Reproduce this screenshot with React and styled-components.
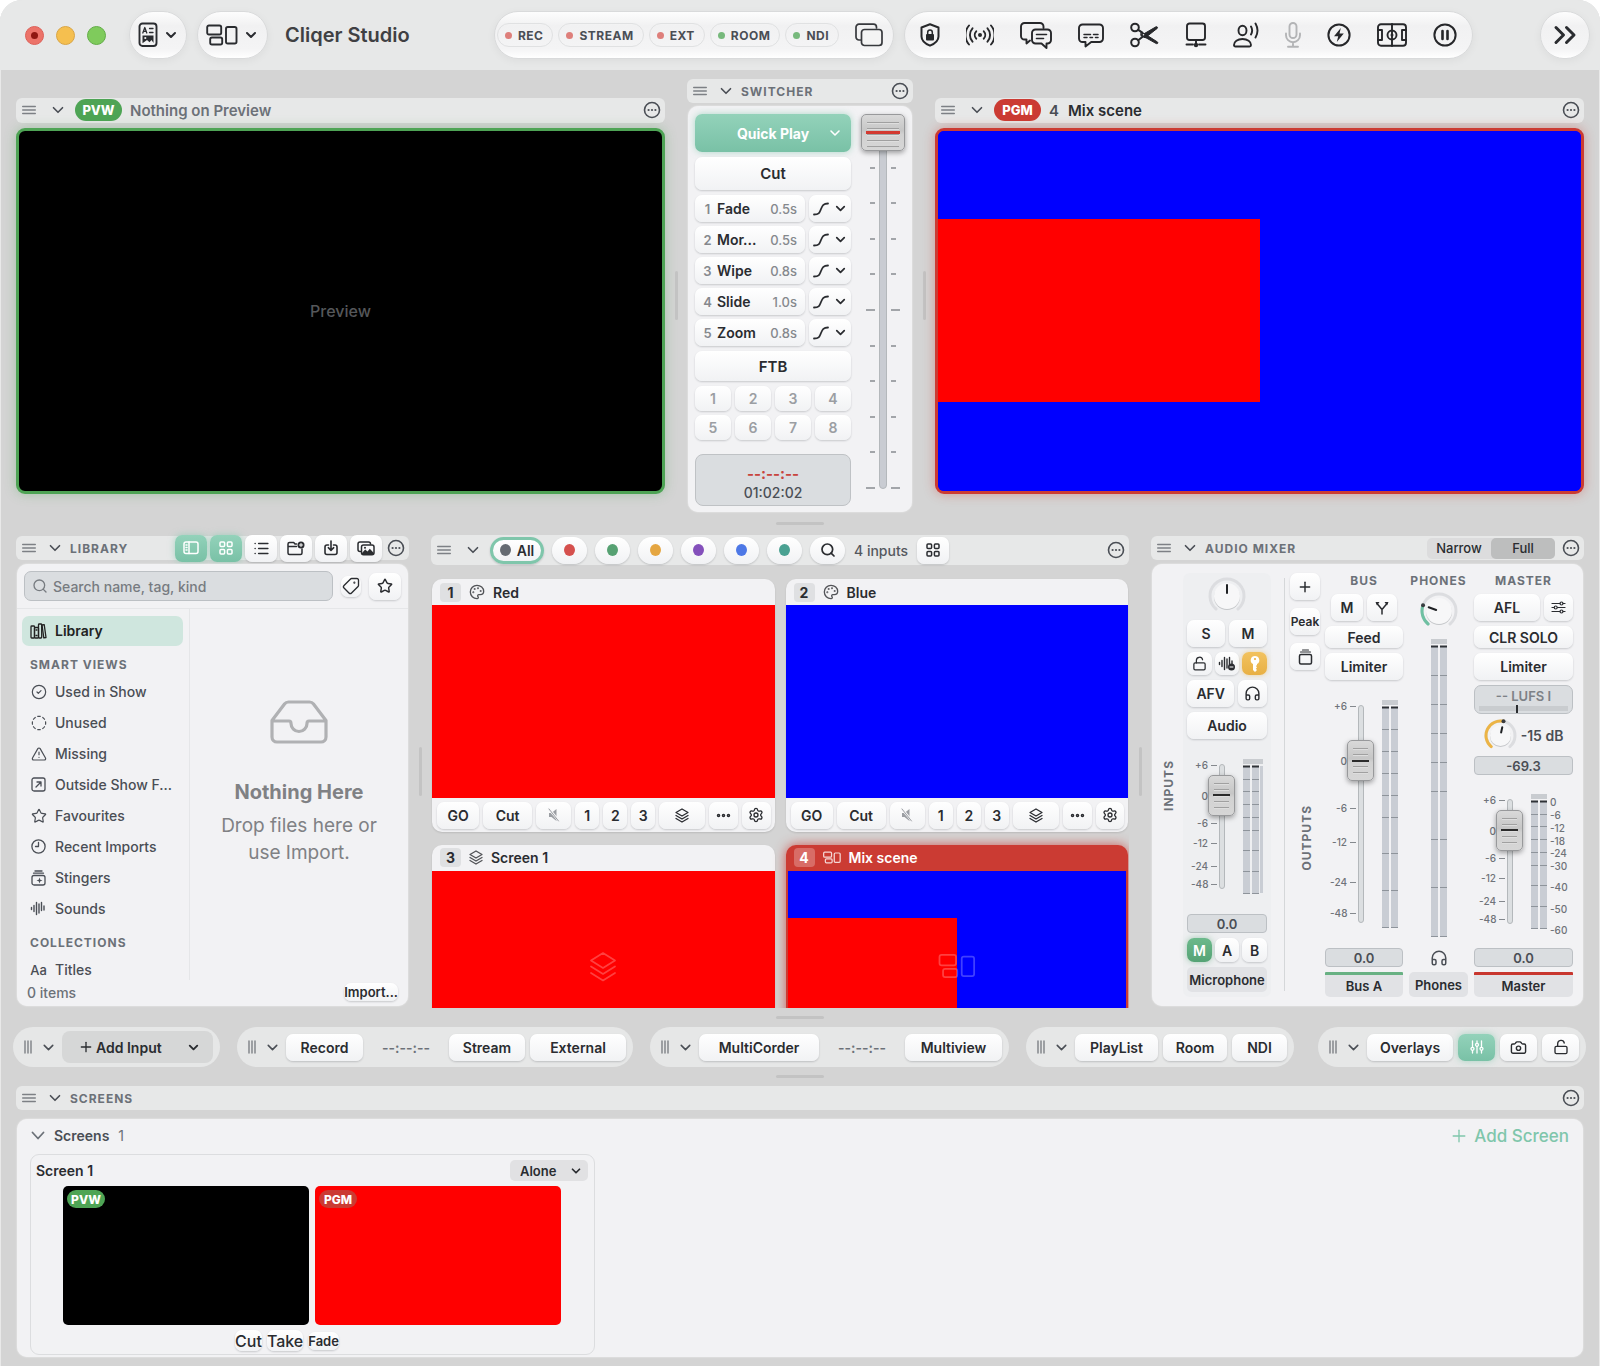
import React from "react";
import styled, { createGlobalStyle, css } from "styled-components";
import {
  ChevronDown, ChevronsRight, Search, Star, Palette, Layers, Settings, Ellipsis,
  Headphones, Plus, Tag, List, Camera, LockOpen, TriangleAlert, CircleCheck,
  CircleDashed,
} from "lucide-react";

const c = {
  bg: "#d4d4d4",
  bar: "#e7e8e8",
  panel: "#f2f2f4",
  ink: "#2a2c30",
  text: "#4a4e55",
  muted: "#6c7178",
  faint: "#9b9ea3",
  mint: "#7fc6ab",
  green: "#4ea455",
  red: "#cb3b33",
  field: "#dadde0",
};

const Global = createGlobalStyle`
  *, *::before, *::after { box-sizing: border-box; }
  html { background: #fff; }
  body { margin: 0; font-family: Inter, "Liberation Sans", sans-serif; font-size: 14px; color: ${c.ink}; }
  button, input, select { font: inherit; color: inherit; margin: 0; }
  button { border: 0; padding: 0; background: none; }
  svg { display: block; flex: none; }
  h1, h2, h3, p { margin: 0; }
`;

/* ---------- icons ---------- */

const Glyph = ({ w, h, vw = w, vh = h, sw = 2, children }) => (
  <svg width={w} height={h} viewBox={`0 0 ${vw} ${vh}`} fill="none" stroke="currentColor"
    strokeWidth={sw} strokeLinecap="round" strokeLinejoin="round" aria-hidden="true">
    {children}
  </svg>
);

const Grip = () => (
  <Glyph w={14} h={10} sw={1.4}><path d="M.7 1.500h12.600M.7 5h12.600M.7 8.500h12.600" stroke="#7d8085" /></Glyph>
);
const GripV = () => (
  <Glyph w={8} h={14} sw={1.4}><path d="M1 1v12M4 1v12M7 1v12" stroke="#7d8085" /></Glyph>
);
const Down = ({ s = 16, sw = 2.4 }) => <ChevronDown size={s} strokeWidth={sw} />;
const WideDown = () => <Glyph w={14} h={9} sw={1.8}><path d="m1.500 1.500 5.500 6 5.500-6" /></Glyph>;
const More = () => (
  <Glyph w={18} h={18} sw={1.6}>
    <circle cx="9" cy="9" r="7.500" />
    <g fill="currentColor" stroke="none"><circle cx="5.600" cy="9" r="1.100" /><circle cx="9" cy="9" r="1.100" /><circle cx="12.400" cy="9" r="1.100" /></g>
  </Glyph>
);
const DocIcon = () => (
  <Glyph w={20} h={26} sw={1.9}>
    <rect x="1.500" y="1.500" width="17" height="22.500" rx="3" />
    <path d="M4.800 11 6.800 5.500l2 5.500M5.600 9.400h2.500M11.500 6.500H15M11.500 10.500H15" strokeWidth="1.300" />
    <path d="M4.500 13.500h11v7.500l-2-3-2 2.200-2.500-2.200-4.500 3.200z" fill="currentColor" stroke="none" />
    <circle cx="7.300" cy="16" r="1.100" fill="#f4f4f4" stroke="none" />
  </Glyph>
);
const SceneIcon = ({ w = 32, h = 22, sw = 1.9 }) => (
  <Glyph w={w} h={h} vw={32} vh={22} sw={sw}>
    <rect x="1.200" y="1.500" width="14" height="9" rx="1.800" />
    <rect x="4.200" y="13.500" width="12" height="7" rx="1.800" />
    <rect x="20" y="3" width="10.500" height="16.500" rx="1.800" />
  </Glyph>
);
const WindowsIcon = () => (
  <Glyph w={28} h={24} sw={1.7}>
    <path d="M5.500 17H4a3 3 0 0 1-3-3V4.200a3 3 0 0 1 3-3h14.500a3 3 0 0 1 3 3V5" />
    <rect x="6.500" y="6.500" width="20.500" height="16" rx="3" fill="#f4f4f4" />
  </Glyph>
);
const ShieldIcon = () => (
  <Glyph w={20} h={24} sw={2}>
    <path d="M10 1.300 18.500 4.500v9c0 4.500-4 7.300-8.500 9.200-4.500-1.900-8.500-4.700-8.500-9.200v-9z" />
    <rect x="6" y="11" width="8" height="6.500" rx="1" fill="currentColor" stroke="none" />
    <path d="M7.700 11V9.200a2.300 2.300 0 0 1 4.600 0V11" strokeWidth="1.500" />
  </Glyph>
);
const BroadcastIcon = () => (
  <Glyph w={28} h={22} sw={1.9}>
    <circle cx="14" cy="11" r="2" fill="currentColor" stroke="none" />
    <path d="M10.200 7.300a5.500 5.500 0 0 0 0 7.400M17.800 7.300a5.500 5.500 0 0 1 0 7.400M6.500 4.300a10 10 0 0 0 0 13.400M21.500 4.300a10 10 0 0 1 0 13.400M3 1.500a14.500 14.500 0 0 0 0 19M25 1.500a14.500 14.500 0 0 1 0 19" />
  </Glyph>
);
const ChatsIcon = () => (
  <Glyph w={32} h={27} sw={1.9}>
    <path d="M10 18.500 6.500 21.500v-4H4.500a3.500 3.500 0 0 1-3.500-3.500V4.500A3.500 3.500 0 0 1 4.500 1H20a3.500 3.500 0 0 1 3.500 3.500V6" />
    <path d="M15.500 7.500h12A3.500 3.500 0 0 1 31 11v7a3.500 3.500 0 0 1-3.500 3.500h-1V26l-5-4.500h-6A3.500 3.500 0 0 1 12 18v-7a3.500 3.500 0 0 1 3.500-3.500z" />
    <path d="M16.500 12.500h10M16.500 16.500h7" strokeWidth="1.600" />
  </Glyph>
);
const CaptionIcon = () => (
  <Glyph w={26} h={25} sw={1.9}>
    <path d="M4.500 1.500h17A3.500 3.500 0 0 1 25 5v10.500a3.500 3.500 0 0 1-3.500 3.500h-8.300L7.500 23.500V19h-3A3.500 3.500 0 0 1 1 15.500V5a3.500 3.500 0 0 1 3.500-3.500z" />
    <path d="M6 11.500h6.500M15.500 11.500H20M6 14.500h3M12 14.500h2.500M17.500 14.500H20" strokeWidth="1.500" />
  </Glyph>
);
const ScissorsIcon = () => (
  <Glyph w={29} h={26} sw={2}>
    <circle cx="5" cy="5.500" r="3.800" /><circle cx="5" cy="20.500" r="3.800" />
    <path d="M8.200 7.800 12 10.300M8.200 18.200 13 14.500" />
    <path d="M11 13.500 26 4.800c1.200-.4 2 .5 1.200 1.600L15.500 15.600z" fill="currentColor" strokeWidth="1" />
    <path d="M11.500 9.800 27.500 20c.8 1.100 0 2-1.200 1.600L11 13z" fill="currentColor" strokeWidth="1" />
    <circle cx="13.500" cy="12.800" r=".8" fill="#f4f4f4" stroke="none" />
  </Glyph>
);
const DisplayIcon = () => (
  <Glyph w={22} h={26} sw={1.9}>
    <rect x="2" y="1.500" width="18" height="16.500" rx="2.500" />
    <path d="M11 18v3M1.500 22.500h6.500M14 22.500h6.500" />
    <circle cx="11" cy="23" r="2.200" fill="currentColor" stroke="none" />
  </Glyph>
);
const VoiceIcon = () => (
  <Glyph w={26} h={26} sw={1.9}>
    <ellipse cx="9.500" cy="8.500" rx="4" ry="4.800" />
    <path d="M2.500 24.500c-1 0-1.500-.6-1.500-1.500 0-3.500 3.500-6 8.500-6s8.500 2.500 8.500 6c0 .9-.5 1.500-1.500 1.500zM18 4.500a8 8 0 0 1 0 8M22.500 1.500a14 14 0 0 1 0 14" />
  </Glyph>
);
const MicIcon = () => (
  <Glyph w={16} h={26} sw={1.9}>
    <rect x="4.500" y="1" width="7" height="15" rx="3.500" />
    <path d="M1 11.500v1.700a7 7 0 0 0 14 0v-1.700M8 20.500v4M3 24.800h10" />
  </Glyph>
);
const BoltIcon = () => (
  <Glyph w={24} h={24} sw={2}>
    <circle cx="12" cy="12" r="10.600" />
    <path d="M13.800 5 7 13.200h4.200L9.800 19l7-8.400h-4.300z" fill="currentColor" stroke="none" />
  </Glyph>
);
const CourtIcon = () => (
  <Glyph w={30} h={24} sw={1.9}>
    <rect x="1" y="1.200" width="28" height="21.600" rx="3" />
    <path d="M15 1v22M1 7h4v10H1M29 7h-4v10h4" />
    <circle cx="15" cy="12" r="4.500" /><circle cx="15" cy="12" r="1.500" fill="currentColor" stroke="none" />
  </Glyph>
);
const PauseIcon = () => (
  <Glyph w={24} h={24} sw={2}><circle cx="12" cy="12" r="10.600" /><path d="M9.500 8v8M14.500 8v8" strokeWidth="2.600" /></Glyph>
);
const CurveIcon = () => (
  <Glyph w={16} h={14} sw={1.8}><path d="M1 12.500c5.500 0 5.500-2 7-5.500s2.500-5.500 7-5.500" /></Glyph>
);
const SidebarIcon = () => (
  <Glyph w={16} h={14} sw={1.5}><rect x="1" y="1" width="14" height="11.500" rx="2" /><path d="M6 1v11.500M3 4h1M3 6.500h1M3 9h1" /></Glyph>
);
const GridIcon = () => (
  <Glyph w={14} h={14} sw={1.5}>
    <rect x="1" y="1" width="4.600" height="4.600" rx="1" /><rect x="8.400" y="1" width="4.600" height="4.600" rx="1" />
    <rect x="1" y="8.400" width="4.600" height="4.600" rx="1" /><rect x="8.400" y="8.400" width="4.600" height="4.600" rx="1" />
  </Glyph>
);
const FolderPlusIcon = () => (
  <Glyph w={18} h={15} sw={1.5}>
    <path d="M9.500 3H8L6.700 1.500H2.500A1.500 1.500 0 0 0 1 3v9a1.500 1.500 0 0 0 1.500 1.500h11A1.500 1.500 0 0 0 15 12V8M1 5.500h8.500" />
    <circle cx="14" cy="4" r="3.500" fill="currentColor" stroke="none" /><path d="M14 2.500v3M12.500 4h3" stroke="#fff" strokeWidth="1" />
  </Glyph>
);
const ImportIcon = () => (
  <Glyph w={14} h={16} sw={1.6}>
    <path d="M4.500 5H3a2 2 0 0 0-2 2v5.500a2 2 0 0 0 2 2h8a2 2 0 0 0 2-2V7a2 2 0 0 0-2-2H9.500M7 1v9M4.300 7.700 7 10.300l2.700-2.600" />
  </Glyph>
);
const PhotosIcon = () => (
  <Glyph w={18} h={15} sw={1.5}>
    <path d="M3.500 10.500H3a2 2 0 0 1-2-2V3a2 2 0 0 1 2-2h8.500a2 2 0 0 1 2 2" />
    <rect x="4.500" y="4" width="12.500" height="9.800" rx="2" />
    <path d="m5 12 3.200-3.500 2.300 2 2.300-2.800 4 4.300v1.500H5z" fill="currentColor" stroke="none" /><circle cx="8" cy="6.800" r="1" fill="currentColor" stroke="none" />
  </Glyph>
);
const BooksIcon = () => (
  <Glyph w={17} h={16} sw={1.3}>
    <rect x="1" y="3" width="3.500" height="12" rx=".8" /><rect x="4.500" y="4.500" width="4" height="10.500" rx=".8" /><rect x="8.500" y="1" width="3.200" height="14" rx=".8" />
    <path d="m12 2 2.200-.4L16 14.500l-2.200.4zM6 7h1M6 12.500h1" />
  </Glyph>
);
const ClockIcon = () => (
  <Glyph w={15} h={15} sw={1.3}><circle cx="7.500" cy="7.500" r="6.600" /><path d="M7.500 3.500v4h-3" /></Glyph>
);
const OutsideIcon = () => (
  <Glyph w={15} h={15} sw={1.3}><rect x="1" y="1" width="13" height="13" rx="2" /><path d="m5 10 5-5M6 5h4v4" /></Glyph>
);
const StingerIcon = () => (
  <Glyph w={15} h={16} sw={1.3}>
    <rect x="1" y="5.500" width="13" height="9.500" rx="2" /><path d="M2.500 3.200h10M4 1h7" />
    <path d="M8.500 7.500 9.300 9.700l2.200.8-2.200.8-.8 2.200-.8-2.200-2.200-.8 2.200-.8z" fill="currentColor" stroke="none" />
  </Glyph>
);
const WaveIcon = ({ minus }) => (
  <Glyph w={18} h={15} sw={1.4}>
    <path d="M1.500 6.500v2M4 4.500v6M6.500 1.500v12M9 3v9M11.500 1.500v8M14 5v4" />
    {minus && <><circle cx="13.500" cy="11" r="3.500" fill="currentColor" stroke="none" /><path d="M12 11h3" stroke="#fff" strokeWidth="1" /></>}
  </Glyph>
);
const KeyIcon = () => (
  <Glyph w={12} h={18} sw={1}>
    <path d="M6 1a4.300 4.300 0 0 0-2 8.100V15l2 2 2-2-1.200-1.300L8 12.500 7 11l1-1V9.100A4.300 4.300 0 0 0 6 1z" fill="#fff" stroke="none" />
    <circle cx="6" cy="4" r="1.100" fill="#ecb445" stroke="none" />
  </Glyph>
);
const StackIcon = () => (
  <Glyph w={15} h={16} sw={1.5}><rect x="1.500" y="5.500" width="12" height="9.500" rx="1.500" /><path d="M2.500 3h10M4.500 1h6" strokeWidth="1.100" /></Glyph>
);
const SplitIcon = () => (
  <Glyph w={14} h={14} sw={1.5}><path d="M7 13V8.500L2 2.500M7 8.500l5-6" /><path d="M.5 1h4L2 4.500zM13.500 1h-4L12 4.500z" fill="currentColor" stroke="none" /></Glyph>
);
const SlidersIcon = () => (
  <Glyph w={15} h={13} sw={1.2}>
    <path d="M1 2.500h8M12 2.500h2M1 6.500h2M6.500 6.500H14M1 10.500h8M12 10.500h2" />
    <circle cx="10.500" cy="2.500" r="1.500" /><circle cx="4.700" cy="6.500" r="1.500" /><circle cx="10.500" cy="10.500" r="1.500" />
  </Glyph>
);
const FadersIcon = () => (
  <Glyph w={14} h={14} sw={1.3}>
    <path d="M2.500 1v6M2.500 10.500V13M7 1v2M7 6.500V13M11.500 1v6M11.500 10.500V13" />
    <circle cx="2.500" cy="8.800" r="1.500" /><circle cx="7" cy="4.800" r="1.500" /><circle cx="11.500" cy="8.800" r="1.500" />
  </Glyph>
);
const MutedIcon = () => (
  <Glyph w={14} h={14} sw={1}>
    <path d="M2 5h2.500L9.500 1v12l-5-4H2z" fill="currentColor" stroke="none" /><path d="m2 1 10 12" stroke="#f6f6f7" strokeWidth="2.500" /><path d="m2 1 9.500 12" />
  </Glyph>
);
const LayersMark = () => (
  <Glyph w={28} h={32} sw={1.7}>
    <path d="M14 2 26 9.500 14 17 2 9.500zM2 15.500 14 23l12-7.500M2 22l12 7.500L26 22" />
  </Glyph>
);
const LayersIcon = () => (
  <Glyph w={14} h={15} sw={1.3}>
    <path d="M7 1l6 3.500-6 3.500-6-3.500zM1 7.500 7 11l6-3.500M1 10.500 7 14l6-3.500" />
  </Glyph>
);

/* ---------- shared parts ---------- */

const raised = css`
  background: linear-gradient(#ffffff, #f1f2f4);
  box-shadow: 0 1px 2px rgba(30, 35, 45, 0.2);
`;
const mint = css`
  background: linear-gradient(#93d2ba, #79c1a6);
  color: #fff;
  box-shadow: 0 0 7px rgba(127, 198, 171, 0.6);
`;
const tones = {
  mint,
  amber: css`background: linear-gradient(#f2c25e, #e8b044); color: #fff; box-shadow: 0 0 5px rgba(232, 176, 68, 0.5);`,
  green: css`background: linear-gradient(#6cb98b, #55a375); color: #fff; box-shadow: 0 0 6px rgba(85, 163, 117, 0.5);`,
};

const Button = styled.button`
  display: inline-flex;
  align-items: center;
  justify-content: center;
  gap: 4px;
  flex: ${(p) => (p.$grow ? `${p.$grow} 1 0` : "none")};
  min-width: 0;
  width: ${(p) => (p.$w ? `${p.$w}px` : "auto")};
  height: ${(p) => p.$h || 27}px;
  border-radius: 7px;
  font-size: ${(p) => p.$size || 14}px;
  font-weight: 600;
  white-space: nowrap;
  color: ${c.ink};
  ${raised}
  ${(p) => tones[p.$tone]}
  ${(p) => p.$quiet && css`color: ${c.faint};`}
`;

const Row = styled.div`
  display: flex;
  align-items: center;
  gap: ${(p) => p.$gap || 4}px;
`;

const Header = styled.header`
  display: flex;
  align-items: center;
  height: ${(p) => p.$h || 24}px;
  flex: none;
  padding: 0 4px 0 6px;
  border-radius: 6px;
  background: ${c.bar};
  color: ${c.text};
`;
const Fold = styled.button`
  display: flex;
  margin: ${(p) => (p.$wide ? "0 8px 0 13px" : "0 6px 0 10px")};
`;
const PanelTitle = styled.h2`
  font-size: 12px;
  font-weight: 700;
  letter-spacing: 1px;
  color: ${c.muted};
`;
const Spacer = styled.span`flex: 1;`;
const IconButton = styled.button`display: flex; color: inherit;`;

const Head = ({ title, h, children }) => (
  <Header $h={h}>
    <Grip />
    <Fold aria-label="Collapse" $wide={!title}><Down s={18} sw={2.2} /></Fold>
    {title && <PanelTitle>{title}</PanelTitle>}
    {children}
    <IconButton aria-label="More"><More /></IconButton>
  </Header>
);

const Panel = styled.div`
  background: ${c.panel};
  border-radius: 10px;
  box-shadow: 0 0 2px rgba(255, 255, 255, 0.7);
`;

const SplitRow = styled.div`
  flex: none;
  height: ${(p) => p.$h}px;
  display: flex;
  align-items: center;
  justify-content: center;
  &::before { content: ""; width: 48px; height: 3px; border-radius: 2px; background: #c3c3c3; }
`;
const SplitCol = styled.div`
  display: flex;
  align-items: center;
  justify-content: center;
  &::before { content: ""; width: 3px; height: 49px; border-radius: 2px; background: #c3c3c3; }
`;

/* ---------- window ---------- */

const Window = styled.div`
  display: flex;
  flex-direction: column;
  height: 100vh;
  min-height: 1366px;
  overflow: hidden;
  background: ${c.bg};
  border-radius: 22px 22px 0 0;
  box-shadow: inset 1px 0 #e9e9e9, inset -1px 0 #e9e9e9;
`;

const TitleBar = styled.header`
  display: flex;
  align-items: center;
  flex: none;
  height: 70px;
  padding: 0 10px 0 25px;
  background: ${c.bar};
`;
const Light = styled.button`
  display: grid;
  place-items: center;
  width: 19px;
  height: 19px;
  margin-right: 12px;
  border-radius: 50%;
  background: ${(p) => p.$color};
  border: 1px solid ${(p) => p.$edge};
  &::before { content: ""; width: 7px; height: 7px; border-radius: 50%; background: ${(p) => (p.$dot ? "#8f1711" : "none")}; }
`;
const Capsule = styled.div`
  display: flex;
  align-items: center;
  justify-content: center;
  height: 48px;
  border-radius: 24px;
  background: linear-gradient(#fdfdfd, #f1f1f2 30%, #f4f4f5 80%, #fff);
  border: 1px solid #d9dadb;
  box-shadow: 0 2px 8px rgba(0, 0, 0, 0.05);
`;
const MenuCapsule = styled(Capsule).attrs({ as: "button" })`
  width: ${(p) => p.$w}px;
  gap: ${(p) => p.$gap}px;
  margin-left: ${(p) => p.$ml}px;
`;
const AppTitle = styled.h1`
  margin-left: 17px;
  font-size: 20px;
  font-weight: 600;
  color: #3f4043;
`;
const StatusCapsule = styled(Capsule)`
  width: 400px;
  gap: 5px;
  padding-right: 8px;
  margin-left: auto;
  color: #37393d;
`;
const ToolCapsule = styled(Capsule)`
  gap: 26px;
  width: 569px;
  margin: 0 67px 0 10px;
  color: #26272a;
`;
const Status = styled.button`
  display: flex;
  align-items: center;
  gap: 6px;
  height: 24px;
  padding: 0 9px 0 7px;
  border-radius: 12px;
  border: 1px solid #e0e1e2;
  font-size: 12px;
  font-weight: 700;
  letter-spacing: 0.5px;
  color: ${c.text};
  &::before { content: ""; width: 7px; height: 7px; border-radius: 50%; background: ${(p) => p.$dot}; }
`;
const Tool = styled.button`
  display: flex;
  color: ${(p) => (p.$off ? "#b3b4b6" : "inherit")};
`;
const CopyButton = styled.button`display: flex; margin-left: 11px;`;

const STATUSES = [["REC", "#de7f7b"], ["STREAM", "#de7f7b"], ["EXT", "#de7f7b"], ["ROOM", "#77b97c"], ["NDI", "#77b97c"]];
const TOOLS = [
  ["Security", ShieldIcon], ["Broadcast", BroadcastIcon], ["Chat", ChatsIcon], ["Captions", CaptionIcon], ["Cut", ScissorsIcon],
  ["Display", DisplayIcon], ["Talkback", VoiceIcon], ["Microphone", MicIcon], ["Macros", BoltIcon], ["Scoreboard", CourtIcon], ["Pause", PauseIcon],
];

const TopBar = () => (
  <TitleBar>
    <Light aria-label="Close" $color="#ec7369" $edge="#dd6058" $dot />
    <Light aria-label="Minimise" $color="#f5bf4f" $edge="#d9a545" />
    <Light aria-label="Zoom" $color="#7fcb5c" $edge="#62ad47" />
    <MenuCapsule $w={58} $gap={5} $ml={11} aria-label="Titles"><DocIcon /><Down s={16} sw={3} /></MenuCapsule>
    <MenuCapsule $w={71} $gap={5} $ml={10} aria-label="Layout"><SceneIcon /><Down s={16} sw={3} /></MenuCapsule>
    <AppTitle>Cliqer Studio</AppTitle>
    <StatusCapsule>
      {STATUSES.map(([t, d]) => <Status key={t} $dot={d}>{t}</Status>)}
      <CopyButton aria-label="Windows"><WindowsIcon /></CopyButton>
    </StatusCapsule>
    <ToolCapsule>
      {TOOLS.map(([t, I]) => <Tool key={t} aria-label={t} $off={t === "Microphone"}><I /></Tool>)}
    </ToolCapsule>
    <MenuCapsule $w={50} aria-label="More tools"><ChevronsRight size={36} strokeWidth={2} /></MenuCapsule>
  </TitleBar>
);

/* ---------- monitors ---------- */

const Stage = styled.section`
  display: grid;
  grid-template-columns: minmax(0, 1fr) 22px 226px 22px minmax(0, 1fr);
  align-items: center;
  flex: none;
  padding: 9px 16px 0;
`;
const Monitor = styled.article`
  display: flex;
  flex-direction: column;
  gap: 5px;
`;
const Screen = styled.div`
  display: grid;
  place-items: center;
  aspect-ratio: 649 / 366;
  border: 3px solid ${(p) => p.$edge};
  border-radius: 9px;
  background: ${(p) => p.$bg};
  box-shadow: 0 0 12px ${(p) => p.$glow};
  overflow: hidden;
  color: #55575a;
  font-size: 16px;
  font-weight: 500;
`;
const Tally = styled.span`
  display: grid;
  place-items: center;
  width: ${(p) => (p.$small ? 38 : 47)}px;
  height: ${(p) => (p.$small ? 18 : 22)}px;
  border-radius: 11px;
  background: ${(p) => p.$color};
  color: #fff;
  font-size: ${(p) => (p.$small ? 12 : 13)}px;
  font-weight: 800;
`;
const SourceName = styled.h2`
  display: flex;
  gap: 9px;
  margin-left: 8px;
  font-size: 15px;
  font-weight: 600;
  color: ${(p) => (p.$live ? c.ink : c.muted)};
  span { color: ${c.text}; }
`;
const Mix = styled.div`
  display: flex;
  align-items: center;
  width: 100%;
  height: 100%;
  background: #00f;
  &::before { content: ""; width: 50%; height: ${(p) => (p.$tall ? 51 : 50)}%; background: #f00; }
`;

/* ---------- switcher ---------- */

const SwitchCol = styled.article`display: flex; flex-direction: column; gap: 3px;`;
const SwitchPanel = styled(Panel)`
  display: flex;
  gap: 6px;
  margin: 0 1px;
  height: 406px;
  padding: 8px 4px 6px 7px;
`;
const SwitchStack = styled.div`
  display: flex;
  flex-direction: column;
  width: 156px;
  gap: 5px;
`;
const QuickPlay = styled(Button)`
  height: 38px;
  justify-content: space-between;
  padding: 0 8px 0 28px;
  font-weight: 700;
  span { flex: 1; text-align: center; }
`;
const Transitions = styled.div`display: grid; gap: 4px;`;
const Transition = styled(Button)`
  justify-content: flex-start;
  padding: 0 8px 0 8px;
  gap: 5px;
  small { width: 9px; font-size: 13px; color: #85888d; font-weight: 600; }
  b { flex: 1; min-width: 0; text-align: left; font-weight: 600; }
  i { font-style: normal; font-size: 13px; font-weight: 500; color: #85888d; }
`;
const Keys = styled.div`
  display: grid;
  grid-template-columns: repeat(4, 1fr);
  gap: 4px;
`;
const Clock = styled.div`
  display: flex;
  flex-direction: column;
  align-items: center;
  justify-content: flex-end;
  height: 52px;
  padding-bottom: 3px;
  margin-top: auto;
  border: 1px solid #bfc2c5;
  border-radius: 8px;
  background: ${c.field};
  font-size: 14px;
  line-height: 19px;
  font-weight: 500;
  color: ${c.text};
  strong { color: #c8453d; font-size: 15px; font-weight: 700; }
`;
const TBar = styled.div`
  display: grid;
  grid-template-columns: 1fr;
  justify-items: center;
  flex: 1;
  height: 375px;
  > * { grid-area: 1 / 1; }
`;
const Ticks = styled.div`
  display: flex;
  flex-direction: column;
  justify-content: space-between;
  align-items: center;
  width: 100%;
  padding-top: 17px;
`;
const Tick = styled.span`
  width: ${(p) => (p.$long ? 34 : 26)}px;
  height: 2px;
  background: linear-gradient(90deg, #a2a5a9 ${(p) => (p.$long ? 9 : 5)}px, transparent 0, transparent calc(100% - ${(p) => (p.$long ? 9 : 5)}px), #a2a5a9 0);
`;
const Track = styled.span`
  width: ${(p) => p.$w}px;
  height: 100%;
  border: 1px solid #b4b8bb;
  border-radius: 4px;
  background: ${(p) => p.$fill};
`;
const capLines = "repeating-linear-gradient(transparent 0 4px, #a0a0a0 4px 5px, #dedede 5px 6px)";
const Slider = styled.input.attrs({ type: "range" })`
  appearance: none;
  writing-mode: vertical-lr;
  direction: rtl;
  width: ${(p) => p.$w}px;
  height: 100%;
  background: none;
  &::-webkit-slider-thumb {
    appearance: none;
    width: ${(p) => p.$w}px;
    height: ${(p) => p.$cap}px;
    border: 1px solid #98999b;
    border-radius: 5px;
    background:
      linear-gradient(${(p) => p.$mark}, ${(p) => p.$mark}) center / calc(100% - 8px) ${(p) => (p.$thick ? 3 : 2)}px no-repeat,
      ${capLines} center / calc(100% - 10px) calc(100% - 6px) no-repeat,
      linear-gradient(#d9d9d9, #c6c6c6 45%, #d2d2d2 55%, #d6d6d6);
    box-shadow: 0 2px 5px rgba(0, 0, 0, 0.35);
  }
`;

const TRANSITIONS = [["Fade", "0.5s"], ["Mor...", "0.5s"], ["Wipe", "0.8s"], ["Slide", "1.0s"], ["Zoom", "0.8s"]];

const Switcher = () => (
  <SwitchCol>
    <Head title="SWITCHER"><Spacer /></Head>
    <SwitchPanel>
      <SwitchStack>
        <QuickPlay $tone="mint"><span>Quick Play</span><Down s={16} /></QuickPlay>
        <Button $h={33} $size={15}>Cut</Button>
        <Transitions>
          {TRANSITIONS.map(([name, time], i) => (
            <Row key={name}>
              <Transition $grow={1}><small>{i + 1}</small><b>{name}</b><i>{time}</i></Transition>
              <Button $w={42} aria-label={`${name} curve`}><CurveIcon /><Down s={15} sw={2.800} /></Button>
            </Row>
          ))}
        </Transitions>
        <Button $h={30} $size={15}>FTB</Button>
        <Keys>{[1, 2, 3, 4, 5, 6, 7, 8].map((n) => <Button key={n} $h={25} $quiet>{n}</Button>)}</Keys>
        <Clock><strong>--:--:--</strong><span>01:02:02</span></Clock>
      </SwitchStack>
      <TBar>
        <Ticks>{Array.from({ length: 11 }, (_, i) => <Tick key={i} $long={i % 5 === 0} />)}</Ticks>
        <Track $w={8} $fill="#c9ccd2" />
        <Slider $w={44} $cap={37} $mark="#d33a31" $thick aria-label="T-bar" defaultValue={100} />
      </TBar>
    </SwitchPanel>
  </SwitchCol>
);

/* ---------- library ---------- */

const Middle = styled.section`
  display: grid;
  grid-template-columns: minmax(0, 393fr) 22px minmax(0, 698fr) 22px minmax(0, 433fr);
  flex: 1;
  min-height: 0;
  padding: 0 16px;
`;
const Column = styled.article`
  display: flex;
  flex-direction: column;
  gap: 4px;
  min-height: 0;
  padding: 1px 0 2px;
`;
const HeadTools = styled.div`
  display: flex;
  gap: 3px;
  margin: 0 5px 0 auto;
`;
const LibraryPanel = styled(Panel)`
  display: flex;
  flex-direction: column;
  flex: 1;
  min-height: 0;
  margin: 0 1px;
`;
const SearchBar = styled.div`
  display: flex;
  align-items: center;
  gap: 8px;
  height: 45px;
  flex: none;
  padding: 0 7px;
  border-bottom: 1px solid #e5e6e8;
`;
const SearchField = styled.label`
  display: flex;
  align-items: center;
  gap: 5px;
  flex: 1;
  height: 30px;
  padding-left: 7px;
  border: 1px solid #bcc0c4;
  border-radius: 7px;
  background: ${c.field};
  color: #777b80;
  input { flex: 1; min-width: 0; border: 0; outline: 0; padding: 0; background: none; font-size: 14px; font-weight: 500; }
  input::placeholder { color: #777b80; opacity: 1; }
`;
const FlippedTag = styled(Tag)`transform: scaleX(-1);`;
const LibraryBody = styled.div`
  display: grid;
  grid-template-columns: 173px minmax(0, 1fr);
  flex: 1;
  min-height: 0;
  overflow: hidden;
`;
const Nav = styled.nav`
  display: flex;
  flex-direction: column;
  padding: 7px 6px 0 5px;
  border-right: 1px solid #e5e6e8;
  overflow: hidden;
`;
const NavItem = styled.button`
  display: flex;
  align-items: center;
  gap: 8px;
  flex: none;
  height: ${(p) => p.$h || 31}px;
  padding: 0 4px 0 8px;
  border-radius: 7px;
  font-weight: 500;
  line-height: 18px;
  color: ${c.text};
  > span:first-child { display: grid; place-items: center; flex: none; width: 17px; font-size: 13px; }
  > span:last-child { white-space: nowrap; }
  ${(p) => p.$active && css`background: #cfe6de; color: #222; font-weight: 600;`}
`;
const NavTitle = styled.h3`
  flex: none;
  padding: 11px 8px 3px;
  font-size: 12px;
  line-height: 16px;
  font-weight: 700;
  letter-spacing: 1px;
  color: ${c.muted};
`;
const Empty = styled.div`
  display: flex;
  flex-direction: column;
  align-items: center;
  padding: 91px 24px 0;
  text-align: center;
  color: #808184;
  svg { color: #b0b1b3; }
  h3 { margin-top: 35px; font-size: 20px; line-height: 27px; }
  p { margin-top: 6px; font-size: 19px; line-height: 27px; }
`;
const LibraryFoot = styled.footer`
  display: flex;
  align-items: center;
  justify-content: space-between;
  flex: none;
  height: 26px;
  padding: 0 10px 2px;
  font-weight: 500;
  color: ${c.muted};
`;
const TrayIcon = () => (
  <Glyph w={58} h={44} sw={3.2}>
    <path d="M2 20.500 14.500 4c1-1.300 2-2 4-2h21c2 0 3 .7 4 2L56 20.500V37a5 5 0 0 1-5 5H7a5 5 0 0 1-5-5zM2 21h17c1.500 0 2 1 2 2.500a8 8 0 0 0 16 0c0-1.500.500-2.500 2-2.500h17" />
  </Glyph>
);

const thin = { size: 16, strokeWidth: 1.8 };
const SMART = [
  ["Used in Show", <CircleCheck {...thin} />], ["Unused", <CircleDashed {...thin} />], ["Missing", <TriangleAlert {...thin} />],
  ["Outside Show F...", <OutsideIcon />],
  ["Favourites", <Star {...thin} />], ["Recent Imports", <ClockIcon />], ["Stingers", <StingerIcon />], ["Sounds", <WaveIcon />],
];
const LIB_TOOLS = [
  ["Sidebar", <SidebarIcon />, "mint"], ["Grid", <GridIcon />, "mint"], ["List", <List size={17} strokeWidth={2.2} />],
  ["New folder", <FolderPlusIcon />], ["Import", <ImportIcon />], ["Photos", <PhotosIcon />],
];

const Library = () => (
  <Column>
    <Head title="LIBRARY">
      <HeadTools>
        {LIB_TOOLS.map(([t, icon, tone]) => <Button key={t} $w={32} $tone={tone} aria-label={t}>{icon}</Button>)}
      </HeadTools>
    </Head>
    <LibraryPanel>
      <SearchBar>
        <SearchField><Search size={16} strokeWidth={2} /><input placeholder="Search name, tag, kind" aria-label="Search library" /></SearchField>
        <Button $w={20} $h={21} aria-label="Tags"><FlippedTag size={18} strokeWidth={1.8} /></Button>
        <Button $w={32} aria-label="Favourites"><Star size={16} strokeWidth={2.2} /></Button>
      </SearchBar>
      <LibraryBody>
        <Nav>
          <NavItem $active $h={30}><span><BooksIcon /></span><span>Library</span></NavItem>
          <NavTitle>SMART VIEWS</NavTitle>
          {SMART.map(([t, icon]) => <NavItem key={t}><span>{icon}</span><span>{t}</span></NavItem>)}
          <NavTitle>COLLECTIONS</NavTitle>
          <NavItem><span>Aa</span><span>Titles</span></NavItem>
        </Nav>
        <Empty><TrayIcon /><h3>Nothing Here</h3><p>Drop files here or use Import.</p></Empty>
      </LibraryBody>
      <LibraryFoot><span>0 items</span><Button $h={18} $size={13}>Import...</Button></LibraryFoot>
    </LibraryPanel>
  </Column>
);

/* ---------- inputs ---------- */

const InputsCol = styled.article`
  display: flex;
  flex-direction: column;
  gap: 14px;
  min-height: 0;
  overflow: hidden;
`;
const Filters = styled.div`
  display: flex;
  align-items: center;
  gap: 8px;
  flex: 1;
`;
const Chip = styled.button`
  display: flex;
  align-items: center;
  justify-content: center;
  gap: 6px;
  width: ${(p) => (p.$active ? 54 : 35)}px;
  height: 27px;
  border-radius: 14px;
  font-weight: 600;
  color: ${c.ink};
  ${raised}
  ${(p) => p.$active && css`border: 3px solid ${c.mint};`}
`;
const Dot = styled.span`
  width: 11px;
  height: 12px;
  border-radius: 50%;
  background: ${(p) => p.$color};
`;
const Count = styled.span`padding: 0 1px; font-size: 14px; font-weight: 500; color: #55585e;`;
const Cards = styled.div`
  display: grid;
  grid-template-columns: 1fr 1fr;
  gap: 13px 11px;
  padding: 0 1px;
`;
const Card = styled.section`
  border-radius: 10px;
  background: ${(p) => (p.$live ? c.red : c.panel)};
  padding: ${(p) => (p.$live ? "0 2px" : "0")};
  box-shadow: ${(p) => (p.$live ? "0 0 12px rgba(203, 59, 51, 0.8)" : "0 1px 2px rgba(0, 0, 0, 0.12)")};
`;
const CardHead = styled.header`
  display: flex;
  align-items: center;
  gap: 8px;
  height: 26px;
  padding-left: ${(p) => (p.$live ? 6 : 8)}px;
  color: ${(p) => (p.$live ? "#fff" : c.ink)};
  h3 { font-size: 14px; font-weight: 600; }
  svg { opacity: 0.8; }
`;
const Index = styled.span`
  display: grid;
  place-items: center;
  width: 21px;
  height: 19px;
  border-radius: 4px;
  background: ${(p) => (p.$live ? "rgba(255,255,255,.25)" : "#dfe0e2")};
  font-size: 14px;
  font-weight: 700;
`;
const Thumb = styled.div`
  display: grid;
  aspect-ratio: 16 / 9;
  background: ${(p) => p.$color};
  > * { grid-area: 1 / 1; }
  > svg { place-self: center; color: rgba(255, 255, 255, 0.25); }
`;
const CardFoot = styled.footer`
  display: flex;
  align-items: center;
  gap: 4px;
  height: 34px;
  padding: 1px 4px 0 5px;
`;

const InputCard = ({ n, name, icon, color, live, mark, controls }) => (
  <Card $live={live}>
    <CardHead $live={live}><Index $live={live}>{n}</Index>{icon}<h3>{name}</h3></CardHead>
    <Thumb $color={color}>{live && <Mix />}{mark}</Thumb>
    {controls && (
      <CardFoot>
        <Button $grow={42}>GO</Button>
        <Button $grow={49}>Cut</Button>
        <Button $grow={35} $quiet aria-label="Muted"><MutedIcon /></Button>
        <Button $grow={24}>1</Button><Button $grow={24}>2</Button><Button $grow={24}>3</Button>
        <Button $grow={46} aria-label="Layers"><LayersIcon /></Button>
        <Button $grow={29} aria-label="More"><Ellipsis size={17} strokeWidth={3} /></Button>
        <Button $grow={28} aria-label="Settings"><Settings size={16} /></Button>
      </CardFoot>
    )}
  </Card>
);

const Inputs = () => (
  <InputsCol>
    <Head h={30}>
      <Filters>
        <Chip $active><Dot $color="#666b72" />All</Chip>
        {["#d5504d", "#56a172", "#e5a641", "#8450bb", "#4d78e6", "#4aa192"].map((k) => <Chip key={k} aria-label="Colour filter"><Dot $color={k} /></Chip>)}
        <Chip aria-label="Search"><Search size={16} strokeWidth={2.6} /></Chip>
        <Count>4 inputs</Count>
        <Button $w={32} aria-label="Grid"><GridIcon /></Button>
      </Filters>
    </Head>
    <Cards>
      <InputCard n={1} name="Red" icon={<Palette size={16} />} color="#f00" controls />
      <InputCard n={2} name="Blue" icon={<Palette size={16} />} color="#00f" controls />
      <InputCard n={3} name="Screen 1" icon={<LayersIcon />} color="#f00" mark={<LayersMark />} />
      <InputCard n={4} name="Mix scene" icon={<SceneIcon w={18} h={13} sw={2.2} />} live mark={<SceneIcon w={40} h={26} sw={1.500} />} />
    </Cards>
  </InputsCol>
);

/* ---------- mixer ---------- */

const Segmented = styled.div`
  display: flex;
  margin: 0 7px 0 auto;
  border-radius: 5px;
  background: #dcdcdd;
  button { width: 64px; height: 21px; border-radius: 5px; font-size: 13px; font-weight: 500; color: ${c.ink}; }
  button[aria-pressed="true"] { background: #bdbebe; }
`;
const MixerPanel = styled(Panel)`
  display: flex;
  flex: 1;
  min-height: 0;
  margin: 0 1px;
  padding: 9px 10px 9px 0;
`;
const SideLabel = styled.span`
  align-self: center;
  writing-mode: vertical-rl;
  transform: rotate(180deg);
  width: 31px;
  line-height: 34px;
  text-align: center;
  font-size: 12px;
  font-weight: 700;
  letter-spacing: 1px;
  color: ${c.muted};
`;
const Strip = styled.div`
  display: flex;
  flex-direction: column;
  gap: 5px;
  width: 88px;
  padding: 4px 4px 5px;
  border-radius: 7px;
  background: #eeeff1;
`;
const Divider = styled.span`
  width: 1px;
  margin: 5px 5px 6px 13px;
  background: #d5d7d9;
`;
const Utility = styled.div`
  display: flex;
  flex-direction: column;
  gap: 8px;
  width: 30px;
  margin-right: 5px;
  > ${SideLabel} { margin: auto 0; }
`;
const Channel = styled.div`
  display: flex;
  flex-direction: column;
  gap: 5px;
  flex: ${(p) => p.$w} 1 0;
  min-width: 0;
  margin-left: ${(p) => p.$ml || 0}px;
  h3 { font-size: 12px; line-height: 16px; font-weight: 700; letter-spacing: 1px; color: ${c.muted}; text-align: center; white-space: nowrap; }
`;
const Center = styled.div`
  display: flex;
  align-items: center;
  justify-content: center;
  gap: 4px;
  height: ${(p) => (p.$h ? `${p.$h}px` : "auto")};
  font-size: 14px;
  font-weight: 600;
  color: ${c.text};
`;
const Value = styled.output`
  display: grid;
  place-items: center;
  flex: none;
  height: 19px;
  border: 1px solid #bcc0c4;
  border-radius: 4px;
  background: ${c.field};
  font-size: 13px;
  font-weight: 600;
  color: ${c.text};
`;
const Loudness = styled(Value)`
  height: 29px;
  border-radius: 7px;
  color: #7d8186;
  align-content: space-between;
  padding: 2px 4px 0;
  &::after {
    content: "";
    width: 100%;
    height: 8px;
    background: linear-gradient(#2b2d30, #2b2d30) 42% 0 / 2px 8px no-repeat, linear-gradient(#c9cccf, #c9cccf) 0 1px / 100% 5px no-repeat;
  }
`;
const Name = styled.div`
  display: grid;
  place-items: center;
  flex: none;
  height: 25px;
  border-top: 3px solid ${(p) => p.$line || "transparent"};
  border-radius: ${(p) => (p.$line ? "1px 1px 5px 5px" : "5px")};
  background: #e1e2e5;
  font-size: 13px;
  font-weight: 600;
  ${(p) => !p.$line && css`border-top: 0;`}
`;
const FaderBay = styled.div`
  display: flex;
  flex: 1;
  align-items: center;
  justify-content: center;
`;
const FaderRow = styled.div`display: flex; align-items: flex-start;`;
const Scale = styled.div`
  width: ${(p) => (p.$left ? 18 : 26)}px;
  padding-top: ${(p) => (p.$left ? 2 : 0)}px;
  margin: 0 ${(p) => (p.$left ? 0 : -9)}px 0 ${(p) => (p.$left ? 3 : 0)}px;
  font-size: 10px;
  line-height: 12px;
  font-weight: 500;
  color: #6f7379;
`;
const Mark = styled.div`
  display: flex;
  align-items: center;
  justify-content: ${(p) => (p.$left ? "flex-start" : "flex-end")};
  gap: 3px;
  height: 12px;
  margin-bottom: ${(p) => p.$gap - 12}px;
  ${(p) => !p.$left && css`&::after { content: ""; width: 6px; height: 1px; background: #85898e; }`}
`;
const FaderBox = styled.div`
  display: grid;
  justify-items: center;
  width: 27px;
  height: ${(p) => p.$h}px;
  margin: 5px 8px 0 0;
  > * { grid-area: 1 / 1; }
`;
const LEVELS = [0, 0.1, 0.2, 0.3, 0.4, 0.5, 0.665, 0.83, 1];

const Meter = ({ h, side }) => {
  const top = 7, len = h - top - 1, w = side ? 20 : 16;
  return (
    <svg width={w} height={h} aria-hidden="true">
      <rect width={w} height="5" fill="#c9ccd0" />
      <rect y={top} width="7" height={len} fill="#c9cdd4" /><rect x="9" y={top} width="7" height={len} fill="#c9cdd4" />
      {side && <rect x="17" y={top} width="3" height={len} fill="#c9cdd4" />}
      {LEVELS.map((f, i) => (
        <path key={f} d={`M0 ${Math.round(top + f * len) + 0.5}h7m2 0h7`} stroke={i ? "#8e949b" : "#2f3237"} strokeWidth={i ? 1 : 2} />
      ))}
    </svg>
  );
};

const LABELS = ["+6", "0", "-6", "-12", "-24", "-48"];
const Fader = ({ h, gaps, value, name, side, scale }) => (
  <FaderBay>
    <FaderRow>
      <Scale>{LABELS.map((t, i) => <Mark key={t} $gap={gaps[i]}>{t}</Mark>)}</Scale>
      <FaderBox $h={h}>
        <Track $w={6} $fill="#dcdfe1" />
        <Slider $w={27} $cap={41} $mark="#2b2b2b" aria-label={`${name} level`} defaultValue={value} />
      </FaderBox>
      <Meter h={h + 10} side={side} />
      {scale && <Scale $left>{scale.map(([t, g]) => <Mark key={t} $left $gap={g}>{t}</Mark>)}</Scale>}
    </FaderRow>
  </FaderBay>
);

const arc = (cx, r, a, b) => {
  const p = (d) => [cx + r * Math.sin((d * Math.PI) / 180), cx - r * Math.cos((d * Math.PI) / 180)].map((n) => n.toFixed(2)).join(" ");
  return `M${p(a)}A${r} ${r} 0 ${b - a > 180 ? 1 : 0} 1 ${p(b)}`;
};
const Knob = ({ size = 38, angle = 0, color }) => {
  const m = size / 2, r = m - 2, rad = (angle * Math.PI) / 180, s = Math.sin(rad), k = -Math.cos(rad);
  return (
    <svg width={size} height={size} aria-hidden="true">
      <path d={arc(m, r, -140, 140)} fill="none" stroke="#dcdde0" strokeWidth="3" strokeLinecap="round" />
      {color && <path d={arc(m, r, -140, angle)} fill="none" stroke={color} strokeWidth="3" strokeLinecap="round" />}
      {color && <circle cx={m + r * s} cy={m + r * k} r="2" fill="#3a3c40" />}
      <circle cx={m} cy={m + 1} r={m - 6} fill="#c4c6c9" />
      <circle cx={m} cy={m} r={m - 6} fill="#f7f7f8" />
      <path d={`M${m + s * 3} ${m + k * 3}L${m + s * (m - 8)} ${m + k * (m - 8)}`} stroke="#1f2124" strokeWidth="2" strokeLinecap="round" />
    </svg>
  );
};

const SHORT = [31, 27, 20, 23, 18, 12];
const DB = [["0", 13], ["-6", 13], ["-12", 13], ["-18", 12], ["-24", 13], ["-30", 21], ["-40", 22], ["-50", 21], ["-60", 5]];

const Mixer = () => (
  <Column>
    <Head title="AUDIO MIXER">
      <Segmented><button aria-pressed="false">Narrow</button><button aria-pressed="true">Full</button></Segmented>
    </Head>
    <MixerPanel>
      <SideLabel>INPUTS</SideLabel>
      <Strip>
        <Center $h={38}><Knob /></Center>
        <Row><Button $grow={1}>S</Button><Button $grow={1}>M</Button></Row>
        <Row $gap={3}>
          <Button $grow={1} $h={23} aria-label="Lock"><LockOpen size={15} /></Button>
          <Button $grow={1} $h={23} aria-label="Noise gate"><WaveIcon minus /></Button>
          <Button $grow={1} $h={23} $tone="amber" aria-label="Key"><KeyIcon /></Button>
        </Row>
        <Row><Button $grow={48}>AFV</Button><Button $grow={29} aria-label="Listen"><Headphones size={17} /></Button></Row>
        <Button>Audio</Button>
        <Fader name="Microphone" h={125} gaps={SHORT} value={87} side />
        <Value>0.0</Value>
        <Row $gap={3}>
          <Button $grow={1} $h={24} $tone="green">M</Button><Button $grow={1} $h={24}>A</Button><Button $grow={1} $h={24}>B</Button>
        </Row>
        <Name>Microphone</Name>
      </Strip>
      <Divider />
      <Utility>
        <Button aria-label="Add"><Plus size={16} strokeWidth={2.2} /></Button>
        <Button $size={12}>Peak</Button>
        <Button aria-label="Stack"><StackIcon /></Button>
        <SideLabel>OUTPUTS</SideLabel>
      </Utility>
      <Channel $w={78}>
        <h3>BUS</h3>
        <Center><Button $w={32}>M</Button><Button $w={30} aria-label="Route"><SplitIcon /></Button></Center>
        <Button $h={22}>Feed</Button>
        <Button>Limiter</Button>
        <Fader name="Bus A" h={218} gaps={[55, 47, 34, 40, 31, 12]} value={80} />
        <Value>0.0</Value>
        <Name $line="#68b183">Bus A</Name>
      </Channel>
      <Channel $w={59} $ml={6}>
        <h3>PHONES</h3>
        <Center $h={34}><Knob angle={-70} color="#6fc0a2" /></Center>
        <FaderBay><Meter h={298} /></FaderBay>
        <Center $h={19}><Headphones size={18} /></Center>
        <Name>Phones</Name>
      </Channel>
      <Channel $w={99} $ml={6}>
        <h3>MASTER</h3>
        <Row><Button $grow={66}>AFL</Button><Button $grow={29} aria-label="Equaliser"><SlidersIcon /></Button></Row>
        <Button $h={22}>CLR SOLO</Button>
        <Button>Limiter</Button>
        <Loudness>-- LUFS I</Loudness>
        <Center $h={32}><Knob size={33} angle={12} color="#ecb445" />-15 dB</Center>
        <Value>-69.3</Value>
        <Fader name="Master" h={125} gaps={SHORT} value={87} scale={DB} />
        <Value>0.0</Value>
        <Name $line="#c8372f">Master</Name>
      </Channel>
    </MixerPanel>
  </Column>
);

/* ---------- toolbar ---------- */

const Toolbar = styled.nav`
  display: flex;
  gap: 17px;
  flex: none;
  padding: 0 14px 0 13px;
  > :last-child { margin-left: auto; }
`;
const Group = styled.div`
  display: flex;
  align-items: center;
  gap: 5px;
  height: 40px;
  padding: 0 7px 0 11px;
  border-radius: 20px;
  background: #e6e7e7;
  color: ${c.text};
  > button { flex: none; }
`;
const GroupFold = styled.button`display: flex; margin-left: 3px;`;
const AddInput = styled.button`
  display: flex;
  align-items: center;
  justify-content: space-between;
  width: 151px;
  height: 32px;
  padding: 0 12px 0 16px;
  border-radius: 8px;
  background: #d6d7d7;
  font-weight: 600;
  color: ${c.ink};
  span { display: flex; align-items: center; gap: 2px; }
`;
const Timer = styled.span`
  width: 76px;
  text-align: center;
  font-size: 14px;
  font-weight: 600;
  color: ${c.muted};
`;
const Bar = ({ children }) => (
  <Group><GripV /><GroupFold aria-label="Collapse"><Down s={17} sw={2.2} /></GroupFold>{children}</Group>
);

/* ---------- screens ---------- */

const Screens = styled.section`
  display: flex;
  flex-direction: column;
  gap: 9px;
  flex: none;
  padding: 0 16px 9px;
`;
const ScreensPanel = styled(Panel)`
  margin: 0 1px;
  padding: 0 14px 2px;
`;
const ScreensHead = styled.div`
  display: flex;
  align-items: center;
  height: 33px;
  gap: 9px;
  margin-bottom: 2px;
  color: ${c.muted};
  h3 { font-size: 14px; font-weight: 600; color: ${c.text}; }
`;
const AddScreen = styled.button`
  display: flex;
  align-items: center;
  gap: 5px;
  margin-left: auto;
  font-size: 17px;
  font-weight: 500;
  color: ${c.mint};
`;
const ScreenCard = styled.div`
  display: flex;
  flex-direction: column;
  gap: 5px;
  width: 565px;
  padding: 5px 6px 3px 5px;
  margin-left: -1px;
  border: 1px solid #dcdddf;
  border-radius: 9px;
`;
const ScreenTitle = styled.label`
  display: flex;
  align-items: center;
  justify-content: space-between;
  font-size: 14px;
  font-weight: 600;
`;
const Picker = styled.span`
  display: grid;
  align-items: center;
  justify-items: end;
  width: 78px;
  height: 21px;
  border-radius: 5px;
  background: #e1e1e3;
  > * { grid-area: 1 / 1; }
  svg { margin-right: 5px; pointer-events: none; }
  select { appearance: none; width: 100%; height: 21px; padding: 0 10px; border: 0; background: none; font-size: 13px; }
`;
const Pair = styled.div`
  display: grid;
  grid-template-columns: 246px 246px;
  justify-content: center;
  gap: 6px;
`;
const Mini = styled.div`
  height: 139px;
  padding: 4px;
  border-radius: 5px;
  background: ${(p) => p.$bg};
`;
const Takes = styled(Row)`
  justify-content: center;
  padding-right: 50px;
  ${Button} { font-weight: 500; }
  ${Button}:last-child { font-weight: 600; }
`;

export default function App() {
  return (
    <>
      <Global />
      <Window>
        <TopBar />
        <Stage>
          <Monitor>
            <Head h={25}><Tally $color={c.green}>PVW</Tally><SourceName>Nothing on Preview</SourceName><Spacer /></Head>
            <Screen $edge={c.green} $bg="#000" $glow="rgba(78,164,85,.35)">Preview</Screen>
          </Monitor>
          <SplitCol />
          <Switcher />
          <SplitCol />
          <Monitor>
            <Head h={25}><Tally $color={c.red}>PGM</Tally><SourceName $live><span>4</span>Mix scene</SourceName><Spacer /></Head>
            <Screen $edge={c.red} $bg="#00f" $glow="rgba(203,59,51,.4)"><Mix $tall /></Screen>
          </Monitor>
        </Stage>
        <SplitRow $h={23} />
        <Middle>
          <Library />
          <SplitCol />
          <Inputs />
          <SplitCol />
          <Mixer />
        </Middle>
        <SplitRow $h={19} />
        <Toolbar>
          <Bar><AddInput><span><Plus size={16} />Add Input</span><Down s={15} sw={3} /></AddInput></Bar>
          <Bar><Button $w={77}>Record</Button><Timer>--:--:--</Timer><Button $w={76}>Stream</Button><Button $w={96}>External</Button></Bar>
          <Bar><Button $w={120}>MultiCorder</Button><Timer>--:--:--</Timer><Button $w={97}>Multiview</Button></Bar>
          <Bar><Button $w={83}>PlayList</Button><Button $w={64}>Room</Button><Button $w={55}>NDI</Button></Bar>
          <Bar>
            <Button $w={86}>Overlays</Button>
            <Button $w={37} $tone="mint" aria-label="Mixer"><FadersIcon /></Button>
            <Button $w={37} aria-label="Snapshot"><Camera size={17} /></Button>
            <Button $w={37} aria-label="Lock"><LockOpen size={16} /></Button>
          </Bar>
        </Toolbar>
        <SplitRow $h={19} />
        <Screens>
          <Head title="SCREENS"><Spacer /></Head>
          <ScreensPanel>
            <ScreensHead>
              <WideDown /><h3>Screens</h3><span>1</span>
              <AddScreen><Plus size={20} strokeWidth={1.6} />Add Screen</AddScreen>
            </ScreensHead>
            <ScreenCard>
              <ScreenTitle>Screen 1
                <Picker><select defaultValue="Alone"><option>Alone</option></select><Down s={14} sw={3} /></Picker>
              </ScreenTitle>
              <Pair>
                <Mini $bg="#000"><Tally $small $color={c.green}>PVW</Tally></Mini>
                <Mini $bg="#f00"><Tally $small $color={c.red}>PGM</Tally></Mini>
              </Pair>
              <Takes $gap={5}><Button $h={21} $size={16}>Cut</Button><Button $h={21} $size={16}>Take</Button><Button $h={18} $size={13}>Fade</Button></Takes>
            </ScreenCard>
          </ScreensPanel>
        </Screens>
      </Window>
    </>
  );
}
